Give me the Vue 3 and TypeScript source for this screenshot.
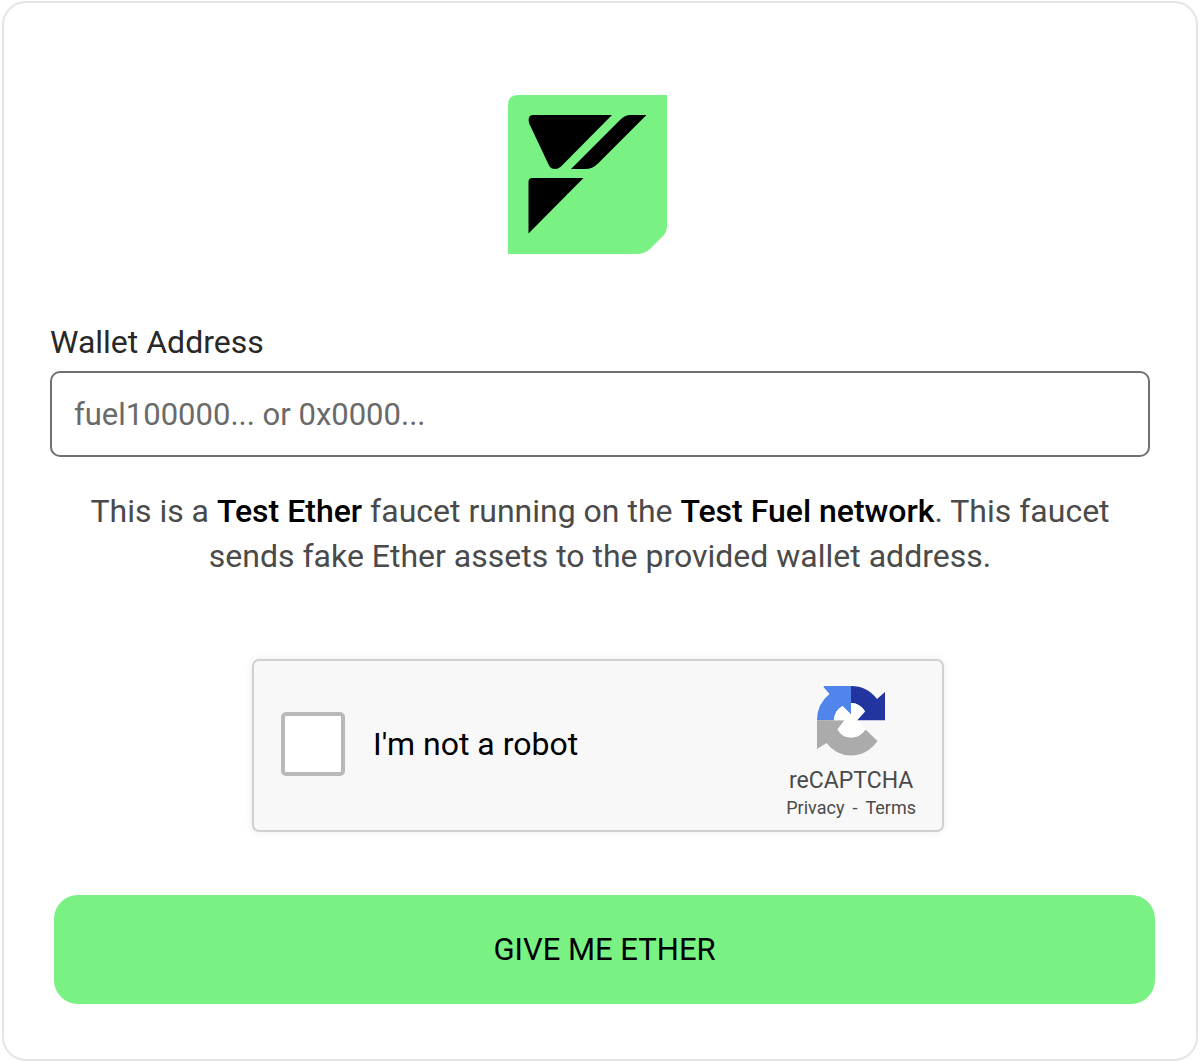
<script setup lang="ts">
import { ref } from 'vue'

const address = ref('')
const human = ref(false)
</script>

<template>
  <main class="card">
    <svg class="logo" viewBox="0 0 159 159" role="img" aria-label="Fuel">
      <path
        fill="#79f283"
        d="M10 0H159V131Q159 137 155 141L143 153Q137 159 129 159H0V10Q0 0 10 0Z"
      />
      <path d="M25 20H104L53 71.5Q50 74 47 74Q43 74 41 70.5L21.2 28.500Q19 20 25 20Z" />
      <path d="M138.500 20L90 68.500Q84.500 74 77 74H63L112 25Q117 20 122 20Z" />
      <path d="M24 83H75.500L20.500 138.500V87Q20.500 83 24 83Z" />
    </svg>

    <form class="form" @submit.prevent>
      <label class="label" for="address">Wallet Address</label>
      <input
        id="address"
        v-model="address"
        class="field"
        type="text"
        placeholder="fuel100000... or 0x0000..."
      />

      <p class="note">
        This is a <strong>Test Ether</strong> faucet running on the
        <strong>Test Fuel network</strong>. This faucet sends fake Ether assets to the provided
        wallet address.
      </p>

      <div class="captcha">
        <label class="check">
          <input v-model="human" class="box" type="checkbox" />
          <span>I'm not a robot</span>
        </label>
        <div class="brand">
          <svg class="mark" viewBox="0 0 68 70" aria-hidden="true">
            <path
              fill="#5185ec"
              d="M7 0H34V28.500L25.500 20Q17 25 17 34.300H0Q0 18 12.500 8L6.500 1Z"
            />
            <path
              fill="#2234a0"
              d="M34 0Q50 0 60 13L68 6V34.300H40L48 25.500Q43 17 34 17Z"
            />
            <path
              fill="#ababab"
              d="M0 34.300H27.500L20.500 43.500Q25 51.500 34 51.500Q43 51.500 48.500 43.500L60.500 55Q50 69.500 34 69.500Q19 69.500 9.500 57L0 63Z"
            />
            <path
              fill="#fff"
              d="M34 17Q43 17 48 25.500L40 34.300L48.500 43.500Q43 51.500 34 51.500Q25 51.500 20.500 43.500L27.500 34.300H17Q17 25 25.500 20L34 28.500Z"
            />
          </svg>
          <span class="name">reCAPTCHA</span>
          <span class="links">
            <a href="#privacy">Privacy</a>
            <span>-</span>
            <a href="#terms">Terms</a>
          </span>
        </div>
      </div>

      <button class="submit" type="submit">GIVE ME ETHER</button>
    </form>
  </main>
</template>

<style>
body {
  margin: 0;
  background: #fff;
}
</style>

<style scoped>
.card {
  box-sizing: border-box;
  display: flex;
  flex-direction: column;
  margin: 1px 2px 3px;
  padding: 92px 46px 55px;
  border: 2px solid #e4e4e9;
  border-radius: 24px;
  font-family: Roboto, "Liberation Sans", sans-serif;
  color: #000;
}
.logo {
  width: 159px;
  height: 159px;
  align-self: center;
  margin-right: 25px;
}
.form {
  display: flex;
  flex-direction: column;
}
.label {
  margin-top: 68px;
  font-size: 32px;
  line-height: 40px;
  color: #282828;
}
.field {
  box-sizing: border-box;
  width: 100%;
  height: 86px;
  margin-top: 9px;
  padding: 0 22px;
  border: 2px solid #707070;
  border-radius: 10px;
  background: #fff;
  font: inherit;
  font-size: 31px;
}
.field::placeholder {
  color: #6a6a6a;
  opacity: 1;
}
.note {
  margin: 32px 20px 0;
  font-size: 32px;
  line-height: 45px;
  text-align: center;
  color: #4a4a4a;
}
.note strong {
  font-weight: 500;
  color: #000;
}
.captcha {
  box-sizing: border-box;
  display: flex;
  justify-content: space-between;
  align-self: center;
  width: 692px;
  max-width: 100%;
  height: 173px;
  margin: 80px 4px 0 0;
  padding: 0 26px 0 27px;
  border: 2px solid #d0d0d0;
  border-radius: 7px;
  background: #f8f8f8;
  box-shadow: 0 0 8px rgba(0, 0, 0, 0.08);
}
.check {
  display: flex;
  align-items: center;
  gap: 28px;
  padding-bottom: 4px;
  font-size: 32px;
  line-height: 40px;
}
.box {
  appearance: none;
  box-sizing: border-box;
  width: 64px;
  height: 64px;
  margin: 0;
  border: 4px solid #b9b9b9;
  border-radius: 5px;
  background: #fff;
}
.box:checked {
  background: #79f283;
}
.brand {
  display: flex;
  flex-direction: column;
  align-items: center;
  padding-top: 25px;
  color: #4a4a4a;
}
.mark {
  width: 68px;
  height: 70px;
}
.name {
  margin-top: 10px;
  font-size: 23px;
  line-height: 30px;
}
.links {
  display: flex;
  gap: 8px;
  font-size: 18px;
  line-height: 24px;
}
.links a {
  color: inherit;
  text-decoration: none;
}
.submit {
  height: 109px;
  margin: 63px -5px 0 4px;
  border: 0;
  border-radius: 24px;
  background: #79f283;
  font: inherit;
  font-size: 31px;
  color: #000;
}
</style>
